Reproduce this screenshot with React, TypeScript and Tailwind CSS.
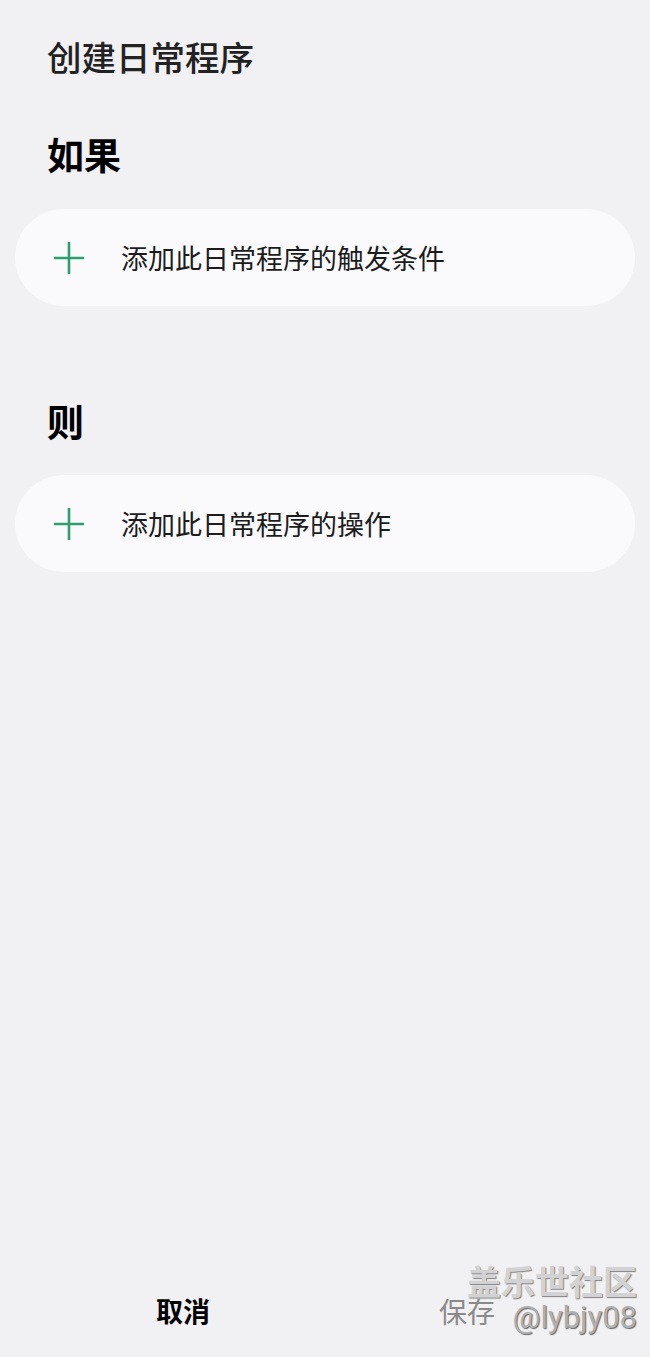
import React from 'react';

const font = "font-['Noto_Sans_CJK_SC','Noto_Sans',Roboto,sans-serif]";

function PlusIcon() {
  return (
    <svg width="32" height="34" viewBox="0 0 32 34" className="shrink-0">
      <path d="M16 1v32M1 17h30" stroke="#2f9e6c" strokeWidth="2.6" fill="none" />
    </svg>
  );
}

function AddCard({ label, className }: { label: string; className?: string }) {
  return (
    <div
      className={`mx-[15px] h-[97px] rounded-full bg-[#fafafc] flex items-center pl-[38px] gap-[36px] ${className ?? ''}`}
    >
      <PlusIcon />
      <span className="text-[27px] leading-[32px] text-[#1c1c1c]">{label}</span>
    </div>
  );
}

export default function App() {
  return (
    <div className={`relative h-[1357px] w-full bg-[#f1f1f3] flex flex-col ${font}`}>
      <h1 className="px-[47px] pt-[36px] text-[34.5px] leading-[40px] font-medium text-[#222]">
        创建日常程序
      </h1>

      <h2 className="px-[47px] mt-[54px] text-[37px] leading-[48px] font-bold text-black">如果</h2>
      <AddCard label="添加此日常程序的触发条件" className="mt-[31px]" />

      <h2 className="px-[47px] mt-[91px] text-[37px] leading-[48px] font-bold text-black">则</h2>
      <AddCard label="添加此日常程序的操作" className="mt-[30px]" />

      <div className="flex-1" />

      <div className="h-[92px] grid grid-cols-2 px-[41px] items-center">
        <button className="justify-self-center text-[27px] font-bold text-black">取消</button>
        <button className="justify-self-center text-[28px] text-[#8a8a8a]">保存</button>
      </div>

      {/* watermark */}
      <div className="absolute right-[13px] bottom-[20px] flex flex-col items-end pointer-events-none">
        <span className="text-[34px] leading-[36px] font-bold text-[#d2d2d4] [text-shadow:1px_1px_1px_#808080]">
          盖乐世社区
        </span>
        <span className="font-['Roboto',sans-serif] text-[31px] leading-[38px] text-[#b0b0b2] [text-shadow:1px_1px_1px_#666]">
          @lybjy08
        </span>
      </div>
    </div>
  );
}
